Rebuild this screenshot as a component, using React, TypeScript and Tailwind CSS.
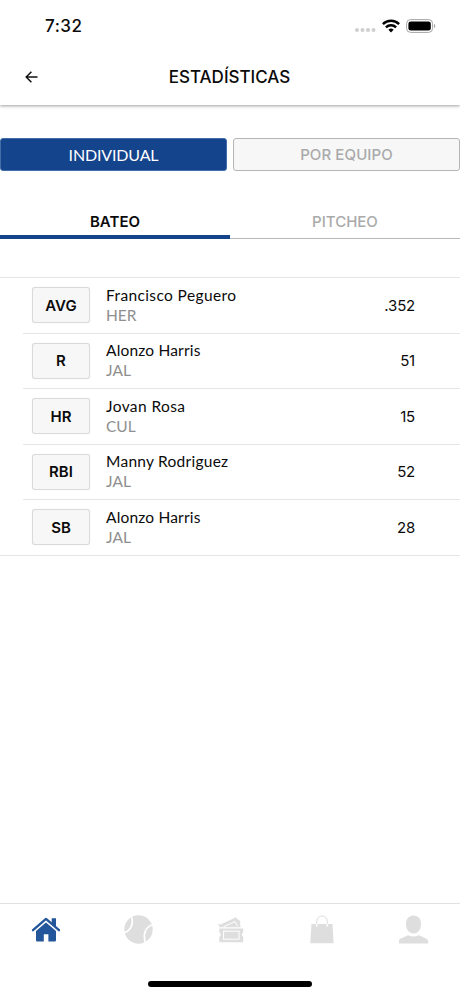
import type { ReactNode } from 'react'

interface Leader {
  stat: string
  player: string
  team: string
  value: string
  nameClass: string
}

const LEADERS: Leader[] = [
  { stat: 'AVG', player: 'Francisco Peguero', team: 'HER', value: '.352', nameClass: 'tracking-[0.38px]' },
  { stat: 'R', player: 'Alonzo Harris', team: 'JAL', value: '51', nameClass: 'tracking-[0.18px]' },
  { stat: 'HR', player: 'Jovan Rosa', team: 'CUL', value: '15', nameClass: 'tracking-[0.4px]' },
  { stat: 'RBI', player: 'Manny Rodriguez', team: 'JAL', value: '52', nameClass: 'tracking-[0.26px]' },
  { stat: 'SB', player: 'Alonzo Harris', team: 'JAL', value: '28', nameClass: 'tracking-[0.18px]' },
]

function StatusBar() {
  return (
    <div className="flex h-[50px] items-center justify-between pt-[1px] pr-[24px] pl-[45px]">
      <span className="font-[Inter] text-[17px] leading-[20px] font-medium tracking-[0.5px]">7:32</span>
      <div className="flex items-center">
        <svg width="22" height="14" viewBox="0 0 22 14" fill="#cfcfcf">
          <circle cx="2" cy="11" r="2" />
          <circle cx="7.5" cy="11" r="2" />
          <circle cx="13" cy="11" r="2" />
          <circle cx="18.5" cy="11" r="2" />
        </svg>
        <svg className="ml-[5px]" width="18" height="14" viewBox="0 0 18 14" fill="none" stroke="#000" strokeWidth="2.4">
          <path d="M.9 5.1a11.5 11.5 0 0 1 16.2 0" />
          <path d="M3.9 8.3a7.2 7.2 0 0 1 10.2 0" />
          <path d="M9 13.4 6.4 10.8a3.7 3.7 0 0 1 5.2 0Z" fill="#000" stroke="none" />
        </svg>
        <svg className="ml-[6px]" width="30" height="14" viewBox="0 0 30 14">
          <rect x=".6" y=".6" width="26" height="12.8" rx="4" fill="none" stroke="#a5a5a5" />
          <rect x="2.4" y="2.4" width="22.4" height="9.2" rx="2.4" />
          <path d="M28 4.8c1.8.7 1.8 3.7 0 4.4Z" fill="#a5a5a5" />
        </svg>
      </div>
    </div>
  )
}

function Header() {
  return (
    <header className="shadow-[0_1px_3px_rgba(0,0,0,0.38)]">
      <StatusBar />
      <div className="grid h-[55px] grid-cols-[50px_1fr_50px] items-center pb-[2px]">
        <button type="button" aria-label="Volver" className="flex justify-end pr-[12px]">
          <svg width="13" height="12" viewBox="0 0 13 12" fill="none" stroke="#111" strokeWidth="1.5">
            <path d="M6.4.7 1.2 6l5.2 5.3M1.2 6h11.3" />
          </svg>
        </button>
        <h1 className="pr-[1px] text-center font-[Inter] text-[17px] leading-[20px] font-medium">ESTADÍSTICAS</h1>
      </div>
    </header>
  )
}

function LeaderRow({ leader, first }: { leader: Leader; first: boolean }) {
  return (
    <li className={first ? 'flex h-[55.5px]' : 'flex h-[55.5px] pl-[23px]'}>
      <div
        className={
          first
            ? 'flex flex-1 items-center border-t border-[#e6e6e6] pr-[45px] pl-[32px]'
            : 'flex flex-1 items-center border-t border-[#e6e6e6] pr-[45px] pl-[9px]'
        }
      >
        <span className="flex h-[36px] w-[58px] items-center justify-center rounded-[3px] border border-[#dadada] bg-[#f7f7f7] pt-[1px] font-[Inter] text-[15px] font-semibold shadow-[0_0_1px_rgba(0,0,0,0.15)]">
          {leader.stat}
        </span>
        <div className="ml-[16px] flex-1 pb-[1px]">
          <p className={`text-[15.5px] leading-[20px] ${leader.nameClass}`}>{leader.player}</p>
          <p className="text-[15.5px] leading-[20px] text-[#8f8f8f]">{leader.team}</p>
        </div>
        <span className="pt-[1px] font-[Inter] text-[15px] tracking-[-0.2px]">{leader.value}</span>
      </div>
    </li>
  )
}

function NavItem({ label, children }: { label: string; children: ReactNode }) {
  return (
    <button type="button" aria-label={label} className="flex flex-1 justify-center pt-[11px]">
      {children}
    </button>
  )
}

function BottomNav() {
  return (
    <nav className="flex h-[93px] flex-col border-t border-[#e2e2e2]">
      <div className="flex flex-1">
        <NavItem label="Inicio">
          <svg width="30" height="30" viewBox="0 0 30 30" fill="#23569a">
            <path d="M2 15.2 15 3.9l13 11.3" fill="none" stroke="#23569a" strokeWidth="2.3" strokeLinecap="round" strokeLinejoin="round" />
            <path d="M20.7 3.2h4.3v8.6l-4.3-3.6Z" />
            <path d="M15 7.4 25 16v9.3q0 1.2-1.2 1.2h-6.4v-7.2h-4.6v7.2H6.2q-1.2 0-1.2-1.2V16Z" />
          </svg>
        </NavItem>
        <NavItem label="Juegos">
          <svg width="30" height="30" viewBox="0 0 30 30" fill="none">
            <circle cx="15.5" cy="14.5" r="14.2" fill="#dedede" />
            <path d="M8 1c3.1 6.6.5 14-7 16.9M29.5 9.7c-7.8 2.4-9.9 10.6-6.7 18.6" stroke="#fff" strokeWidth="1.7" />
          </svg>
        </NavItem>
        <NavItem label="Boletos">
          <svg width="30" height="30" viewBox="0 0 30 30" fill="#dedede">
            <path d="m1.8 9.3 3.6.2L21.2 2.3q.4 2.3 3 2.6l1.4 2.4q-1.5 1.6-.3 3.4l.5 1.6H4.2q.5-2-2.4-3Z" />
            <path d="m8.5 11.8 11.6-5.2 2.5 4.8" fill="none" stroke="#fff" />
            <path d="M4.3 13.6h23.9v3.6q-2.8 2.4 0 4.8v5.3H4.3V22q2.8-2.4 0-4.8Z" />
            <rect x="8.6" y="16.2" width="15.4" height="8" fill="none" stroke="#fff" />
          </svg>
        </NavItem>
        <NavItem label="Tienda">
          <svg width="30" height="30" viewBox="0 0 30 30">
            <path d="M4.5 9h21l1.1 19.3H3.2Z" fill="#dedede" />
            <path d="M9.7 9.5V6a5.3 5 0 0 1 10.6 0v3.5" fill="none" stroke="#dedede" />
            <path d="M9.7 9v2.5M20.3 9v2.5" stroke="#fff" strokeWidth="1.6" />
          </svg>
        </NavItem>
        <NavItem label="Perfil">
          <svg width="30" height="30" viewBox="0 0 30 30" fill="#dedede">
            <path d="M14.5.6c5 0 7.5 3.5 7.5 8.6s-3 9.3-7.5 9.3S7 14.2 7 9.2 9.5.6 14.5.6Z" />
            <path d="M-.3 28.6v-2.4q.3-2.5 3.3-3.3l6-2.6q5.5 2.6 11 0l6 2.6q3 .8 3.3 3.3v2.4Z" />
          </svg>
        </NavItem>
      </div>
      <div className="mb-[9px] h-[6px] w-[164px] self-center rounded-full bg-black" />
    </nav>
  )
}

export default function App() {
  return (
    <div className="flex h-[996px] w-[460px] flex-col bg-white font-[Lato,sans-serif] text-[#0b0b0b]">
      <Header />
      <main className="flex-1">
        <div className="mt-[33px] grid grid-cols-2 gap-[6px]">
          <button type="button" className="h-[33px] rounded-[3px] border border-[#426da6] bg-[#14448c] text-[16px] leading-[20px] tracking-[-0.15px] text-white">
            INDIVIDUAL
          </button>
          <button type="button" className="h-[33px] rounded-[3px] border border-[#b5b5b5] bg-[#f7f7f7] font-[Inter] text-[15px] leading-[20px] font-medium tracking-[0.1px] text-[#aaa]">
            POR EQUIPO
          </button>
        </div>
        <div className="mt-[34px] grid h-[34px] grid-cols-2 font-[Inter] text-[15px] leading-[20px] font-medium">
          <button type="button" className="border-b-[4px] border-[#14448c] pt-[4px] font-semibold">
            BATEO
          </button>
          <button type="button" className="border-b border-[#b8b8b8] pt-[1px] text-[#aaa]">PITCHEO</button>
        </div>
        <ul className="mt-[38px] border-b border-[#e6e6e6]">
          {LEADERS.map((leader, i) => (
            <LeaderRow key={leader.stat} leader={leader} first={i === 0} />
          ))}
        </ul>
      </main>
      <BottomNav />
    </div>
  )
}
